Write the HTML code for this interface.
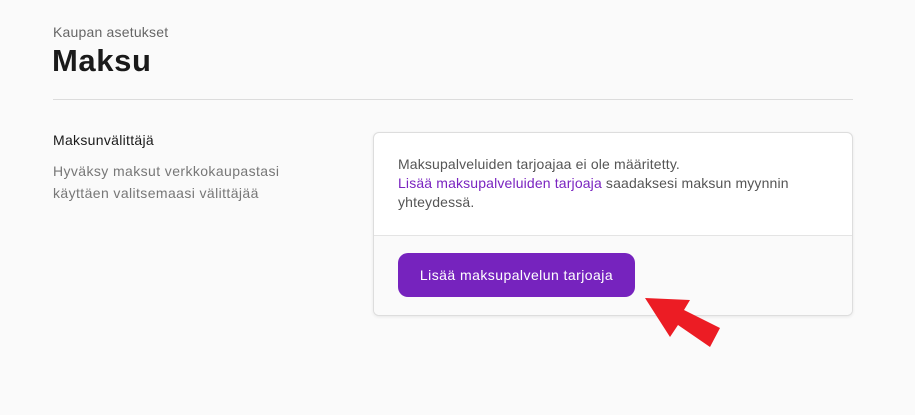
<!DOCTYPE html>
<html><head><meta charset="utf-8"><style>
body{margin:0;width:915px;height:415px;background:#fafafa;font-family:"Liberation Sans",sans-serif;position:relative;overflow:hidden}
.a{position:absolute}
</style></head><body>
<div class="a" style="left:53px;top:24px;font-size:14px;color:#666;letter-spacing:0.2px">Kaupan asetukset</div>
<div class="a" style="left:52px;top:43px;font-size:31px;font-weight:bold;color:#1a1a1a;letter-spacing:0.6px">Maksu</div>
<div class="a" style="left:53px;top:99px;width:800px;height:1px;background:#dcdcdc"></div>
<div class="a" style="left:53px;top:132px;font-size:14px;color:#1a1a1a;letter-spacing:0.3px">Maksunvälittäjä</div>
<div class="a" style="left:53px;top:160px;font-size:14px;line-height:22px;color:#777;letter-spacing:0.4px">Hyväksy maksut verkkokaupastasi<br>käyttäen valitsemaasi välittäjää</div>
<div class="a" style="left:373px;top:132px;width:478px;height:182px;border:1px solid #ddd;border-radius:6px;background:#fff;box-shadow:0 1px 3px rgba(0,0,0,.08);overflow:hidden">
<div style="padding:22px 24px 0 24px;height:80px;font-size:14px;line-height:19px;color:#555;letter-spacing:0.15px">Maksupalveluiden tarjoajaa ei ole määritetty.<br><span style="color:#7a24c0">Lisää maksupalveluiden tarjoaja</span> saadaksesi maksun myynnin yhteydessä.</div>
<div style="border-top:1px solid #e4e4e4;background:#fafafa;height:100px;position:relative">
<div class="a" style="left:24px;top:17px;width:237px;height:44px;background:#7623be;border-radius:10px;color:#fff;font-size:14px;line-height:44px;text-align:center;letter-spacing:0.45px">Lisää maksupalvelun tarjoaja</div>
</div></div>
<svg class="a" style="left:0;top:0" width="915" height="415"><polygon points="645,298 690,300 684,310 720,328 710,347 678,325 670,337" fill="#ec1c24"/></svg>
</body></html>
